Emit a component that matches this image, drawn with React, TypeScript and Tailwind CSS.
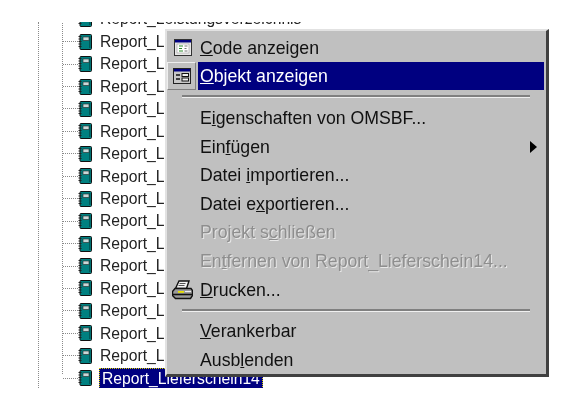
import React from "react";

const reportRows = Array.from({ length: 16 }, (_, i) => i);

const BookIcon = () => (
  <svg width="14" height="16" viewBox="0 0 14 16" className="shrink-0">
    <rect x="2" y="0.5" width="11.5" height="15" rx="1" fill="#008080" stroke="#111" />
    <rect x="5" y="3" width="6" height="3.5" fill="#c8d8d8" stroke="#222" strokeWidth="0.6" />
    <path d="M0.5 2.5h3M0.5 5h3M0.5 7.5h3M0.5 10h3M0.5 12.5h3" stroke="#222" strokeWidth="1" />
    <path d="M11.8 2v12" stroke="#004848" strokeWidth="1" />
  </svg>
);

const CodeIcon = () => (
  <svg width="18" height="17" viewBox="0 0 18 17">
    <rect x="0.5" y="0.5" width="17" height="16" fill="#e8e8e8" stroke="#333" />
    <rect x="1" y="1" width="16" height="2.5" fill="#000080" />
    <rect x="3" y="5" width="12" height="9" fill="#fff" stroke="#999" strokeWidth="0.6" />
    <path d="M5 7h4M5 9.5h3M5 12h4" stroke="#2a8a2a" strokeWidth="1.2" />
    <path d="M10.5 7h3M10.5 9.5h2M10.5 12h3" stroke="#777" strokeWidth="1" />
  </svg>
);

const FormIcon = () => (
  <svg width="18" height="16" viewBox="0 0 18 16">
    <rect x="0.5" y="0.5" width="17" height="15" fill="#c8c8c8" stroke="#222" />
    <rect x="1" y="1" width="16" height="2.5" fill="#000080" />
    <path d="M3 7h4M3 11h4" stroke="#111" strokeWidth="1.4" />
    <rect x="9" y="5.5" width="6.5" height="3" fill="#eee" stroke="#111" />
    <rect x="9" y="10" width="6.5" height="3" fill="#eee" stroke="#111" />
  </svg>
);

const PrinterIcon = () => (
  <svg width="21" height="20" viewBox="0 0 21 20">
    <path d="M7 1h10l-2.5 7.5H3.5z" fill="#f4f4f4" stroke="#111" strokeWidth="1.4" />
    <path d="M7.5 3.5h6M6.5 5.5h6" stroke="#555" />
    <path d="M3 8.5h16l1.5 2v5l-2 3h-15l-3-3v-4z" fill="#9a9a9a" stroke="#111" strokeWidth="1.4" />
    <path d="M1 14.5h19" stroke="#111" strokeWidth="1.6" />
    <rect x="6" y="11" width="6" height="1.8" fill="#e6e000" />
    <path d="M13 11.5h6" stroke="#eee" />
  </svg>
);

function Label({ text, hotkey }: { text: string; hotkey: number }) {
  return (
    <span>
      {text.slice(0, hotkey)}
      <u>{text[hotkey]}</u>
      {text.slice(hotkey + 1)}
    </span>
  );
}

function MenuItem({
  text,
  hotkey,
  disabled,
  icon,
  arrow,
}: {
  text: string;
  hotkey: number;
  disabled?: boolean;
  icon?: React.ReactNode;
  arrow?: boolean;
}) {
  return (
    <div className="flex h-[28.8px] items-center pr-[4px] pt-[1px]">
      <div className="flex w-[33px] shrink-0 items-center justify-center pr-[2px]">{icon}</div>
      <div
        className={`flex flex-1 items-center ${
          disabled ? "text-[#8e8e8e] [text-shadow:1px_1px_0_#e8e8e8]" : "text-[#111]"
        }`}
      >
        <Label text={text} hotkey={hotkey} />
        {arrow && (
          <span className="mr-[5px] ml-auto h-0 w-0 border-y-[6px] border-l-[7px] border-y-transparent border-l-black" />
        )}
      </div>
    </div>
  );
}

const Separator = () => (
  <div className="mr-[16px] ml-[15px] h-[2px] bg-[#808080] shadow-[0_1px_0_#f0f0f0]" />
);

export default function App() {
  return (
    <div className="relative h-[412px] w-[585px] overflow-hidden bg-white font-['Liberation_Sans',sans-serif] text-[15.7px] blur-[0.35px]">
      <div className="pt-[22px]">
        <div className="ml-[38px] h-[366px] overflow-hidden border-l border-dotted border-[#8a8a8a]">
          <div className="ml-[23px] h-full border-l border-dotted border-[#8a8a8a]">
            <div className="-mt-[14px]">
              {reportRows.map((i) => (
                <div key={i} className="flex h-[22.44px] items-center text-[#222]">
                  <span className="w-[15px] border-t border-dotted border-[#8a8a8a]" />
                  <BookIcon />
                  <span className="ml-[8px]">
                    {i === 0 ? "Report_Leistungsverzeichnis" : "Report_Lieferschein" + i}
                  </span>
                </div>
              ))}
              <div className="flex h-[22.44px] items-center">
                <span className="w-[15px] border-t border-dotted border-[#8a8a8a]" />
                <BookIcon />
                <span className="ml-[7px] border border-dotted border-[#d8d000] bg-[#000080] px-[2px] leading-[19px] whitespace-nowrap text-white">
                  Report_Lieferschein14
                </span>
              </div>
            </div>
          </div>
        </div>
      </div>

      {/* context menu */}
      <div className="absolute top-[29px] left-[165px] flex h-[348px] w-[384px] flex-col border-t-2 border-r-[3px] border-b-[3px] border-l-2 border-t-[#e2e2e2] border-r-[#404040] border-b-[#404040] border-l-[#e2e2e2] bg-[#c0c0c0] pt-[2px] text-[17.7px]">
        <MenuItem text="Code anzeigen" hotkey={0} icon={<CodeIcon />} />
        <div className="flex h-[29px] items-stretch pr-[2px]">
          <div className="flex w-[29px] shrink-0 items-center justify-center border-t border-r border-b border-l border-t-[#eeeeee] border-r-[#808080] border-b-[#808080] border-l-[#eeeeee]">
            <FormIcon />
          </div>
          <div className="ml-[2px] flex flex-1 items-center bg-[#000080] pl-[2px] text-white">
            <Label text="Objekt anzeigen" hotkey={0} />
          </div>
        </div>
        <div className="pt-[5px] pb-[6px]">
          <Separator />
        </div>
        <MenuItem text="Eigenschaften von OMSBF..." hotkey={1} />
        <MenuItem text="Einfügen" hotkey={3} arrow />
        <MenuItem text="Datei importieren..." hotkey={6} />
        <MenuItem text="Datei exportieren..." hotkey={7} />
        <MenuItem text="Projekt schließen" hotkey={9} disabled />
        <MenuItem text="Entfernen von Report_Lieferschein14..." hotkey={2} disabled />
        <MenuItem text="Drucken..." hotkey={0} icon={<PrinterIcon />} />
        <div className="pt-[5px] pb-[6px]">
          <Separator />
        </div>
        <MenuItem text="Verankerbar" hotkey={0} />
        <MenuItem text="Ausblenden" hotkey={4} />
      </div>
    </div>
  );
}
